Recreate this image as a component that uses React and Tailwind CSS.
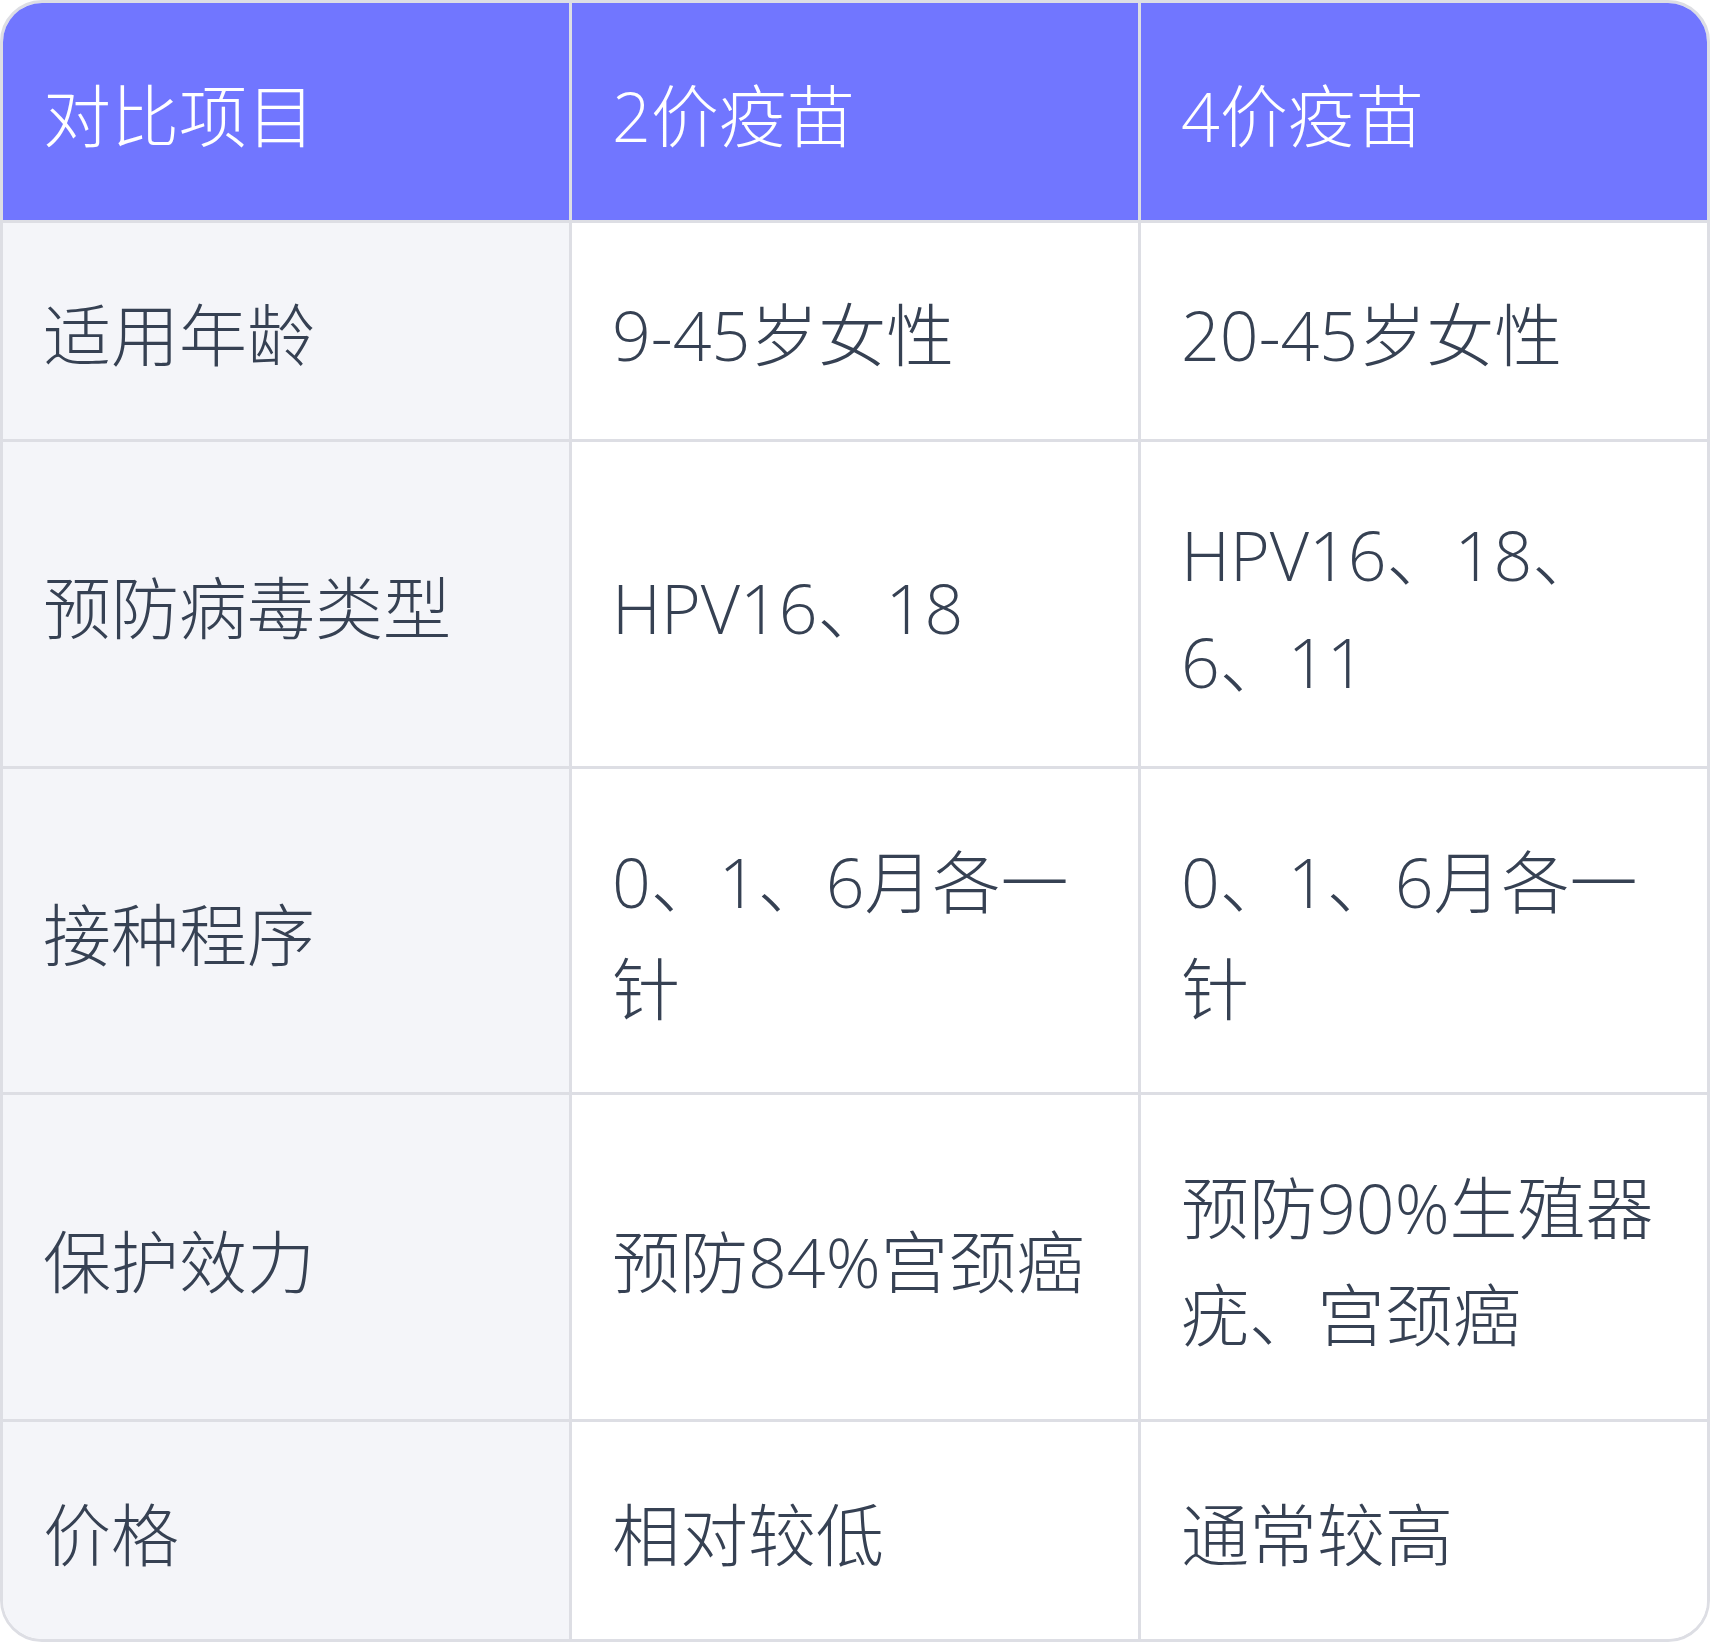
import React from "react";

const header = ["对比项目", "2价疫苗", "4价疫苗"];
const rows = [
  ["适用年龄", "9-45岁女性", "20-45岁女性"],
  ["预防病毒类型", "HPV16、18", "HPV16、18、6、11"],
  ["接种程序", "0、1、6月各一针", "0、1、6月各一针"],
  ["保护效力", "预防84%宫颈癌", "预防90%生殖器疣、宫颈癌"],
  ["价格", "相对较低", "通常较高"],
];

export default function App() {
  return (
    <div
      className="w-[1710px] h-[1642px] bg-white text-[68px] leading-[107px] font-light"
      style={{ fontFamily: '"Open Sans", "Noto Sans CJK SC", "Noto Sans", sans-serif' }}
    >
      <div className="w-full h-full border-[3px] border-[#dddee4] rounded-[42px] overflow-hidden grid grid-cols-[569px_569px_566px] content-start">
        {header.map((h, i) => (
          <div
            key={"h" + i}
            className={
              "bg-[#7176ff] text-white px-10 pt-[58.8px] pb-[50.8px] flex items-center border-b-[3px] border-[#dddee4] " +
              (i < 2 ? "border-r-[3px]" : "")
            }
          >
            {h}
          </div>
        ))}
        {rows.map((r, ri) =>
          r.map((c, ci) => (
            <div
              key={ri + "-" + ci}
              className={
                "px-10 pt-[58.8px] pb-[50.8px] flex items-center text-gray-700 border-[#dddee4] " +
                (ci === 0 ? "bg-[#f4f5f9] " : "bg-white ") +
                (ci < 2 ? "border-r-[3px] " : "") +
                (ri < rows.length - 1 ? "border-b-[3px]" : "")
              }
            >
              <span>{c}</span>
            </div>
          ))
        )}
      </div>
    </div>
  );
}
